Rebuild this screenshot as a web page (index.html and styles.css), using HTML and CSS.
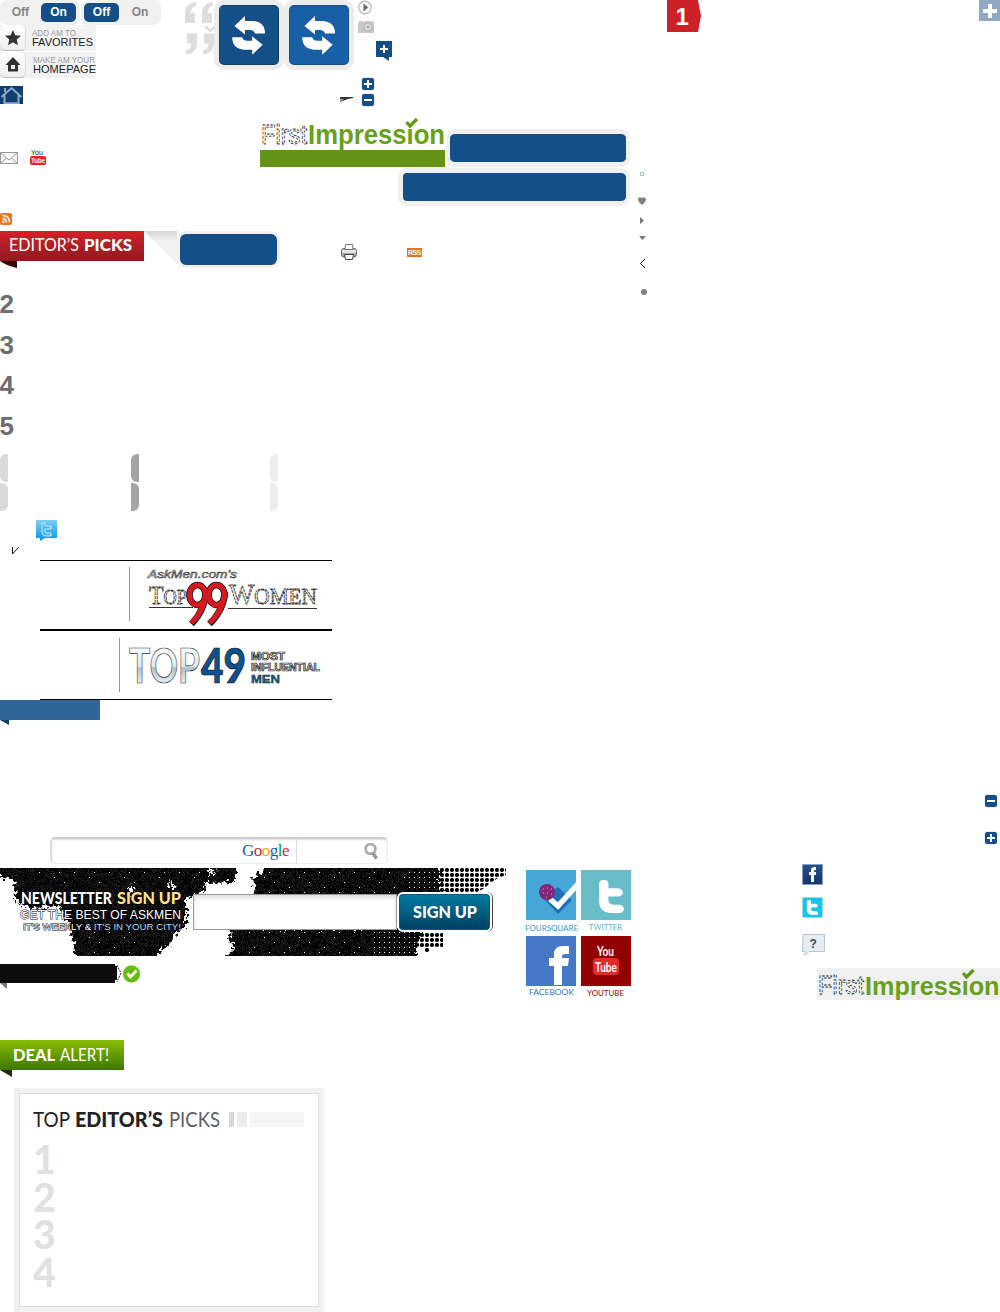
FILE: index.html
```html
<!DOCTYPE html>
<html lang="en">
<head>
<meta charset="utf-8">
<title>Sprites</title>
<link rel="stylesheet" href="styles.css">
</head>
<body>
<svg class="defs" width="0" height="0" aria-hidden="true">
  <defs>
    <symbol id="plus" viewBox="0 0 14 14"><rect width="14" height="14" rx="3" fill="#eee"/><rect x="1" y="1" width="12" height="12" rx="2" fill="#144f87"/><path d="M3 6h3V3h2v3h3v2H8v3H6V8H3z" fill="#fff"/></symbol>
    <symbol id="minus" viewBox="0 0 14 14"><rect width="14" height="14" rx="3" fill="#eee"/><rect x="1" y="1" width="12" height="12" rx="2" fill="#144f87"/><path d="M3 6h8v2H3z" fill="#fff"/></symbol>
    <symbol id="refresh" viewBox="0 0 34 42"><path id="arrow" d="M2.500 12 13 2v5h8q12 1 12 12.500H23Q22 16 18 16h-5v4.500z" fill="#fff"/><use href="#arrow" transform="rotate(180 16.600 21.400)"/></symbol>
    <symbol id="quote" viewBox="0 0 11 21"><path d="M11 0v4Q6 5 5.500 11H10v10H0V12Q0 1 11 0z" fill="#ddd"/></symbol>
    <symbol id="bird" viewBox="0 0 24 32"><path d="M4 0q4-1 5 3v5h10q4 1 4 4t-4 4H9v3q0 5 5 5h6q4 1 4 4t-4 4h-7Q0 32 0 20V4Q0 0 4 0z" fill="#fff"/></symbol>
    <linearGradient id="fade" x2="0" y2="1"><stop stop-color="#d5d5d5"/><stop offset=".3" stop-color="#eff0f0"/><stop offset="1" stop-color="#f1f2f2"/></linearGradient>
    <linearGradient id="silver" gradientUnits="userSpaceOnUse" x1="0" y1="19" x2="0" y2="53"><stop stop-color="#f6fafc"/><stop offset=".5" stop-color="#dde6ed"/><stop offset=".52" stop-color="#aebfcb"/><stop offset="1" stop-color="#eef3f6"/></linearGradient>
    <linearGradient id="sky" x2="0" y2="1"><stop stop-color="#7dcef0"/><stop offset="1" stop-color="#0798dc"/></linearGradient>
    <linearGradient id="navy" x2="0" y2="1"><stop stop-color="#27518d"/><stop offset="1" stop-color="#12356b"/></linearGradient>
    <pattern id="mesh" width="5" height="5" patternUnits="userSpaceOnUse"><rect width="5" height="5" fill="#050505"/><rect x="1" y="1" width="3" height="3" fill="#1b1b1b"/></pattern>
    <pattern id="dots" width="5" height="5" patternUnits="userSpaceOnUse"><circle cx="2" cy="2" r="2.100" fill="#000"/></pattern>
    <pattern id="holes" width="5" height="5" patternUnits="userSpaceOnUse"><rect x="4" y="4" width="1" height="1" fill="#fff"/></pattern>
    <pattern id="sparse" width="35" height="20" patternUnits="userSpaceOnUse"><path d="M4 4h1v1H4zM19 9h1v1h-1zM29 14h1v1h-1zM9 19h1v1H9zM24 4h1v1h-1z" fill="#fff"/></pattern>
    <filter id="ragged" filterUnits="userSpaceOnUse" x="-10" y="-10" width="530" height="110"><feTurbulence type="fractalNoise" baseFrequency=".3" numOctaves="2" seed="4"/><feDisplacementMap in="SourceGraphic" scale="13" xChannelSelector="R" yChannelSelector="G"/></filter>
  </defs>
</svg>

<main class="sheet">
  <div class="toggle toggle-on"><span>Off</span><b>On</b></div>
  <div class="toggle toggle-off"><b>Off</b><span>On</span></div>

  <div class="shortcuts">
    <div class="shortcut"><span class="key"><svg width="16" height="16" viewBox="0 0 16 16"><path d="m8 0 2.300 5.200 5.700.6-4.300 3.800 1.300 5.600L8 12.200l-5 3 1.300-5.600L0 5.800l5.700-.6z" fill="#333"/></svg></span>
      <svg width="70" height="26"><text x="6" y="11" font-size="9" fill="#999" textLength="44" lengthAdjust="spacingAndGlyphs">ADD AM TO</text><text x="6" y="21" font-size="11.500" fill="#222" textLength="61" lengthAdjust="spacingAndGlyphs">FAVORITES</text></svg></div>
    <div class="shortcut"><span class="key"><svg width="16" height="15" viewBox="0 0 16 15"><path d="m8 0 7.500 8H13v6.500H3V8H.5z" fill="#333"/><path d="M6 8h4v4H6z" fill="#eee"/></svg></span>
      <svg width="70" height="26"><text x="7" y="11" font-size="9" fill="#999" textLength="62" lengthAdjust="spacingAndGlyphs">MAKE AM YOUR</text><text x="7" y="21" font-size="11.500" fill="#222" textLength="63" lengthAdjust="spacingAndGlyphs">HOMEPAGE</text></svg></div>
  </div>

  <svg class="s home" width="23" height="18"><rect width="23" height="18" fill="#0e3f70"/><path d="M1.500 11 11.500 2l10 9M4.500 9v8.200h14V9M5 6V2" fill="none" stroke="#91a9c2" stroke-width="2"/></svg>

  <svg class="s quotes" width="32" height="56"><use href="#quote" x="0" y="1" width="11" height="21"/><use href="#quote" x="17" y="1" width="11" height="21"/><g transform="rotate(180 14 32)"><use href="#quote" x="-1" y="10" width="11" height="22"/><use href="#quote" x="16" y="10" width="11" height="22"/></g><path d="m20 25 5 5 5-5" fill="none" stroke="#ccc" stroke-width="1.500"/></svg>

  <div class="refreshers"><span class="refresh"><svg width="34" height="42"><use href="#refresh"/></svg></span><span class="refresh bright"><svg width="34" height="42"><use href="#refresh"/></svg></span></div>

  <svg class="s play" width="16" height="16"><circle cx="8" cy="7.500" r="6.300" fill="#f5f5f5" stroke="#bbb" stroke-width="1.200"/><path d="M6.500 3.500 11 7.500l-4.500 4z" fill="#666"/></svg>
  <svg class="s camera" width="16" height="14"><path d="M0 3h1V1h4v1h1l1-1h7l2 1v11H0z" fill="#c9c9c9"/><circle cx="10" cy="7" r="4" fill="#dedede" stroke="#b3b3b3"/><circle cx="10" cy="7" r="1.800" fill="#b5b5b5"/></svg>
  <svg class="s addtip" width="16" height="20"><path d="M0 0h16v16h-3v4l-6-4H0z" fill="#144f87"/><path d="M4 7h3V4h2v3h3v2H9v3H7V9H4z" fill="#fff"/></svg>
  <div class="steppers"><svg width="14" height="14"><use href="#plus"/></svg><svg width="14" height="14"><use href="#minus"/></svg></div>
  <svg class="s wedge" width="14" height="6"><path d="M0 0h13v1L8 2 0 5z" fill="#333"/><path d="M0 2h4L0 5z" fill="#aaa"/></svg>

  <svg class="s logo" width="190" height="50">
    <text x="1" y="26" font-size="27" fill="#fff" stroke="#111" stroke-width=".8" stroke-dasharray="3 1.500" textLength="46" lengthAdjust="spacingAndGlyphs">First</text>
    <text x="48" y="26" font-size="27" font-weight="bold" fill="#69a118" textLength="137" lengthAdjust="spacingAndGlyphs">Impression</text>
    <path d="M144 3h14v7.500h-14z" fill="#fff"/><path d="m146.500 4 3.500 4 7-7" fill="none" stroke="#5f9c14" stroke-width="3.400"/>
    <rect y="32" width="185" height="17" fill="#659315"/>
  </svg>

  <i class="pill pill-a"></i><i class="pill pill-b"></i><i class="pill pill-c"></i>

  <svg class="s mail" width="18" height="13"><path d="M.5.500h17v11H.5zL9 8l8.500-7.500M.5 11.500 6.500 6m11 5.500L11.500 6" fill="#f6f6f6" stroke="#999"/></svg>
  <svg class="s tube" width="17" height="18"><text x="1" y="7" font-size="8" fill="#222" textLength="12" lengthAdjust="spacingAndGlyphs">You</text><rect y="8" width="16" height="9" rx="2" fill="#f31f12"/><text x="1" y="15" font-size="8" font-weight="bold" fill="#fff" textLength="14" lengthAdjust="spacingAndGlyphs">Tube</text></svg>
  <svg class="s feed" width="12" height="12"><rect width="12" height="12" rx="2" fill="#e37725"/><path d="M2.500 5.500q4 0 4 4M2.500 2.500q7 0 7 7" fill="none" stroke="#fff" stroke-width="1.500"/><circle cx="3.500" cy="8.800" r="1.200" fill="#fff"/></svg>

  <svg class="s picks" width="178" height="38"><defs><linearGradient id="red" x2="0" y2="1"><stop stop-color="#d32128"/><stop offset="1" stop-color="#8d1b20"/></linearGradient></defs>
    <rect width="144" height="30" fill="url(#red)"/><path d="M0 30h17v7Q7 35 0 30z" fill="#3c070a"/><path d="M144 0h33v33z" fill="url(#fade)"/>
    <g class="geo" font-size="17" fill="#fff"><text x="9" y="20" textLength="70" lengthAdjust="spacingAndGlyphs">EDITOR’S</text><text x="84" y="20" font-weight="900" textLength="48" lengthAdjust="spacingAndGlyphs">PICKS</text></g></svg>

  <svg class="s printer" width="16" height="16"><rect x=".5" y="4.500" width="15" height="8.500" rx="2.500" fill="#aaa" stroke="#666"/><path d="M4.500.500h7l.5 5H4z" fill="#fff" stroke="#777"/><path d="M1 6h14v3H1z" fill="#e5e5e5"/><path d="M3.500 10.500h9l-1 5h-7z" fill="#fff" stroke="#444"/></svg>
  <span class="rss">RSS</span>

  <svg class="s glyphs" width="12" height="130"><path d="M2.500 2.500h3v3h-3z" fill="none" stroke="#a9bccc"/><path d="M0 29q1-3 4-1 3-2 4 1 0 3-4 6-4-3-4-6z" fill="#808080"/><path d="m2 47 4 3.500L2 54zM1 66h7l-3.500 4z" fill="#777"/><path d="m7 89-4.500 4.500L7 98" fill="none" stroke="#111"/><circle cx="6" cy="122" r="3" fill="#808080"/></svg>

  <svg class="s tag" width="34" height="32"><path d="M0 0h31l3 16-3 16H0z" fill="#ce2027"/><text x="8.500" y="25" font-size="24" font-weight="bold" fill="#fff">1</text></svg>
  <svg class="s expand" width="21" height="21"><rect width="21" height="21" fill="#91a8c1"/><path d="M4 9h5V4h4v5h5v4h-5v5H9v-5H4z" fill="#fff"/></svg>

  <div class="ranks"><span>2</span><span>3</span><span>4</span><span>5</span></div>

  <div class="caps cap-a"><i></i><i></i></div>
  <div class="caps cap-b"><i></i><i></i></div>
  <div class="caps cap-c"><i></i><i></i></div>

  <svg class="s tweet" width="21" height="22"><path d="M1 0h19q1 0 1 1v16q0 1-1 1H9l-5 3v-3H0V1q0-1 1-1z" fill="url(#sky)"/><path d="M6 3h3v3h6v3H9v2q0 2 2 2h4v3H10q-4 0-4-5z" fill="#4eb8e9" stroke="#c4ecfc"/></svg>
  <svg class="s tick" width="9" height="9"><path d="M.5 0v7l6-6.500" fill="none" stroke="#111"/></svg>

  <div class="banners">
    <svg width="292" height="69">
      <path d="M89.500 6v54" stroke="#999"/>
      <text x="108" y="17" font-size="10" font-style="italic" fill="#eee" stroke="#333" stroke-width=".5" textLength="89" lengthAdjust="spacingAndGlyphs">AskMen.com's</text>
      <g class="serif" fill="#eee" stroke="#333" stroke-width=".9" stroke-dasharray="3 .7"><text x="109" y="43" font-size="26" textLength="38" lengthAdjust="spacingAndGlyphs">T<tspan font-size="20">OP</tspan></text><text x="189" y="43" font-size="29" textLength="88" lengthAdjust="spacingAndGlyphs">W<tspan font-size="23">OMEN</tspan></text></g>
      <path d="M109 46.500h44m35 1h89" stroke="#333"/>
      <g fill="none" stroke="#111" stroke-width="6.500"><ellipse cx="157.500" cy="34" rx="8" ry="10"/><path d="M165.500 31q0 17-14 32"/><ellipse cx="176.500" cy="34" rx="8" ry="10"/><path d="M184.500 31q0 17-15 32"/></g>
      <g fill="none" stroke="#d71920" stroke-width="5"><ellipse cx="157.500" cy="34" rx="8" ry="10"/><path d="M165.500 31q0 17-14 31"/><ellipse cx="176.500" cy="34" rx="8" ry="10"/><path d="M184.500 31q0 17-15 31"/></g>
    </svg>
    <svg width="292" height="68">
      <path d="M79.500 7v54" stroke="#999"/>
      <g class="geo"><text x="89" y="52" font-size="47" fill="url(#silver)" stroke="#333" stroke-width=".7" font-weight="bold" textLength="71" lengthAdjust="spacingAndGlyphs">TOP</text>
      <text x="161" y="52" font-size="47" font-weight="900" fill="#0d5290" stroke="#111" stroke-width=".7" textLength="45" lengthAdjust="spacingAndGlyphs">49</text></g>
      <g font-size="10.500" font-weight="bold" fill="#ddd" stroke="#222" stroke-width=".7"><text x="211" y="29" textLength="34" lengthAdjust="spacingAndGlyphs">MOST</text><text x="211" y="39.500" textLength="69" lengthAdjust="spacingAndGlyphs">INFLUENTIAL</text><text x="211" y="52" fill="#1061ab" stroke-width=".4" textLength="29" lengthAdjust="spacingAndGlyphs">MEN</text></g>
    </svg>
  </div>
  <svg class="s strip" width="100" height="26"><path d="M0 0h100v20H0z" fill="#30659a"/><path d="M0 20h9v5z" fill="#173e68"/></svg>

  <div class="search"><span class="google"><b>G</b><b>o</b><b>o</b><b>g</b><b>l</b><b>e</b></span><span class="go"><svg width="15" height="18"><circle cx="6.500" cy="7" r="4.900" fill="none" stroke="#aaa" stroke-width="2.600"/><path d="m8.500 10.500 4 6" stroke="#999" stroke-width="3.500"/></svg></span></div>

  <section class="newsletter">
    <svg width="510" height="88">
      <g filter="url(#ragged)"><path d="M-9-9H236V14l-30 1-4 10-13 5h-3v28l-12 10-6 10-10 6v14H78L70 58 60 38 30 40 16 34 15 11-9 9z" fill="url(#mesh)"/><path d="M266-9H440v31l40 10H255l-2-24 10-3zM230 60H421v8l-4 8v20H220l14-15-5-10z" fill="url(#mesh)"/><path d="M128 26l3-10 4 10zM168 20l3-9 4 9zM208 2l2 5 6-4z" fill="#fff"/></g>
      <path d="M440 0h66v7l-8 3-8 5-5 5-10 5h-35zM413 62h30v18h-13v5h-5v-5h-12z" fill="url(#dots)"/>
      <path d="M30 0h190v15H30zM262 0h160v28H262zM240 62h120v24H240zM80 64h60v22H80z" fill="url(#sparse)"/>
      <path d="M405 0h46v30h-46zM370 62h48v25h-48z" fill="url(#holes)"/>
      <g class="outlined" fill="#fff"><g class="geo" font-size="16.500" font-weight="900"><text x="21" y="36" textLength="91" lengthAdjust="spacingAndGlyphs">NEWSLETTER</text><text x="117" y="36" fill="#ffe08a" textLength="64" lengthAdjust="spacingAndGlyphs">SIGN UP</text></g>
      <text x="20" y="51" font-size="13" textLength="161" lengthAdjust="spacingAndGlyphs">GET THE BEST OF ASKMEN</text>
      <text x="23" y="62" font-size="9.500" textLength="158" lengthAdjust="spacingAndGlyphs">IT'S WEEKLY &amp; <tspan fill="#b9dcfa">IT'S IN YOUR CITY!</tspan></text></g>
    </svg>
    <div class="signup"><span class="field"></span><span class="submit"><svg width="66" height="18"><text class="geo" x="1" y="15" font-size="17" font-weight="900" fill="#fff" textLength="64" lengthAdjust="spacingAndGlyphs">SIGN UP</text></svg></span></div>
  </section>

  <svg class="s badge" width="142" height="28"><path d="M0 2h115v2h2v14h-2v3H0z" fill="#0c0c0c"/><path d="m117 3 4 8-4 9" fill="none" stroke="#222" stroke-dasharray="2 1"/><path d="M0 21h7v6z" fill="#777"/><circle cx="131.500" cy="12" r="9.500" fill="#eee"/><circle cx="131.500" cy="12" r="8.500" fill="#66bd08"/><path d="m127.500 11.500 3 3.500 6-6.500" fill="none" stroke="#fff" stroke-width="2.700"/></svg>

  <div class="social">
    <figure class="c-four"><svg width="50" height="50"><rect width="50" height="50" fill="#45a7d8"/><path d="m17 28 15-11 14 13-14 14z" fill="#1d70b7"/><path d="m24 29 8 7L52 14" fill="none" stroke="#fff" stroke-width="5.500"/><circle cx="21" cy="22" r="8" fill="#86267b"/><path d="M17 19h1m3-1h1m3 1h1m-9 4h1m3 0h1m3 1h1m-6 3h1" stroke="#d29bc9"/></svg><figcaption><svg width="54" height="10"><text x="0" y="8.500" textLength="53" lengthAdjust="spacingAndGlyphs">FOURSQUARE</text></svg></figcaption></figure>
    <figure class="c-tw"><svg width="50" height="50"><rect width="50" height="50" fill="#67bdc8"/><use href="#bird" x="18" y="10" width="25" height="33"/></svg><figcaption><svg width="54" height="10"><text x="9" y="7.500" textLength="33" lengthAdjust="spacingAndGlyphs">TWITTER</text></svg></figcaption></figure>
    <figure class="c-fb"><svg width="50" height="50"><rect width="50" height="50" fill="#4678c8"/><path d="M28 49V30h-5v-8h5v-4q0-8 9-8h6v8h-4q-3 0-3 3v1h7l-1 8h-6v19z" fill="#fff"/></svg><figcaption><svg width="54" height="11"><text x="4" y="7" textLength="45" lengthAdjust="spacingAndGlyphs">FACEBOOK</text></svg></figcaption></figure>
    <figure class="c-yt"><svg width="50" height="50"><rect width="50" height="50" fill="#920000"/><rect x="12" y="22" width="26" height="17" rx="4" fill="#e32b2d"/><g font-size="14" font-weight="bold" fill="#fff"><text x="16" y="20" textLength="17" lengthAdjust="spacingAndGlyphs">You</text><text x="14" y="35.500" textLength="22" lengthAdjust="spacingAndGlyphs">Tube</text></g></svg><figcaption><svg width="54" height="11"><text x="7" y="8" textLength="37" lengthAdjust="spacingAndGlyphs">YOUTUBE</text></svg></figcaption></figure>
  </div>

  <div class="collapse"><svg width="14" height="14"><use href="#minus"/></svg><svg width="14" height="14"><use href="#plus"/></svg></div>

  <div class="contacts">
    <svg width="22" height="21"><rect x=".5" y=".5" width="20" height="20" fill="url(#navy)" stroke="#8ba0c0"/><path d="M9 18v-7H7V8h2V6q0-3 4-3h1v3h-1q-1 0-1 2h2v3h-2v7z" fill="#fff"/></svg>
    <svg width="22" height="22"><rect x=".5" y=".5" width="20" height="20" rx="1" fill="#13c5ef" stroke="#9adcec"/><use href="#bird" x="4" y="3" width="13" height="15"/></svg>
    <svg width="24" height="24"><path d="M1 .5h21.500v17H7l-4 4v-4H.5z" fill="#e5edf3" stroke="#b3c5d1"/><text x="7.500" y="13.500" font-size="12" font-weight="bold" fill="#445">?</text></svg>
  </div>

  <svg class="s logo-small" width="183" height="32"><rect width="183" height="32" fill="#f0f0f0"/>
    <text x="1" y="26" font-size="26" fill="#fff" stroke="#111" stroke-width=".8" stroke-dasharray="3 1.500" textLength="46" lengthAdjust="spacingAndGlyphs">First</text>
    <text x="48" y="27" font-size="26" font-weight="bold" fill="#69a118" textLength="134.500" lengthAdjust="spacingAndGlyphs">Impression</text>
    <path d="M143 3h14v8h-14z" fill="#f0f0f0"/><path d="m146 5 3.500 4 7-7" fill="none" stroke="#5f9c14" stroke-width="3.400"/></svg>

  <svg class="s deal" width="124" height="38"><defs><linearGradient id="green" x2="0" y2="1"><stop stop-color="#8abf00"/><stop offset="1" stop-color="#3f7600"/></linearGradient></defs><rect width="124" height="30" fill="url(#green)"/><path d="M0 30h12v7z" fill="#1d2a10"/><g class="geo" font-size="17" fill="#fff"><text x="13" y="21" font-weight="900" textLength="42" lengthAdjust="spacingAndGlyphs">DEAL</text><text x="60" y="21" textLength="49" lengthAdjust="spacingAndGlyphs">ALERT!</text></g></svg>

  <section class="card">
    <header><svg width="188" height="22"><g class="geo" font-size="20.500"><text x="0" y="18" fill="#222" textLength="37" lengthAdjust="spacingAndGlyphs">TOP</text><text x="42" y="18" font-weight="900" fill="#222" textLength="88" lengthAdjust="spacingAndGlyphs">EDITOR’S</text><text x="136" y="18" fill="#606060" textLength="51" lengthAdjust="spacingAndGlyphs">PICKS</text></g></svg><span class="bars"><i></i><i></i><i></i></span></header>
    <ol><li>1</li><li>2</li><li>3</li><li>4</li></ol>
  </section>
</main>
</body>
</html>
```
FILE: styles.css
```css
* { box-sizing: border-box; }
body { margin: 0; background: #fff; font-family: "Liberation Sans", Arial, sans-serif; }
svg { display: block; flex: none; }
.defs { position: absolute; }
.geo { font-family: Lato, sans-serif; }
.serif { font-family: "Liberation Serif", serif; }
.outlined { paint-order: stroke; stroke: #000; stroke-width: 1px; }

/* free canvas of independent sprites */
.sheet { position: relative; width: 1000px; height: 1312px; overflow: hidden; }
.s, .toggle, .shortcuts, .refreshers, .steppers, .pill, .rss, .ranks, .caps,
.banners, .search, .newsletter, .social, .collapse, .contacts, .card { position: absolute; }

.toggle { top: 0; width: 80px; height: 25px; padding: 3px 4px 3px 3px; display: flex; align-items: center; background: #f0f0f0; border-radius: 7px; font: bold 12px/19px "Liberation Sans", sans-serif; color: #858585; text-align: center; }
.toggle span { flex: 1; }
.toggle b { width: 35px; background: #144f87; color: #fff; border-radius: 5px; }
.toggle-on { left: 0; }
.toggle-on span { padding-right: 12px; text-align: right; }
.toggle-off { left: 81px; }
.toggle-off span { padding-left: 4px; }

.shortcuts { left: 0; top: 25px; display: grid; gap: 1px; }
.shortcut { width: 96px; height: 26px; display: flex; background: #f2f2f2; }
.key { width: 26px; display: grid; place-items: center; border-radius: 5px; background: linear-gradient(#fff, #eee); border-bottom: 1px solid #bbb; border-right: 1px solid #ddd; }

.home { left: 0; top: 86px; }
.quotes { left: 185px; top: 1px; }
.refreshers { left: 214px; top: 0; display: flex; }
.refresh { width: 70px; height: 70px; border: 5px solid #ececec; border-radius: 10px; background: #144f87; display: grid; place-items: center; box-shadow: inset 0 0 0 1px #123f70; }
.bright { background: #1860a6; box-shadow: inset 0 0 0 1px #144f87; }
.play { left: 357px; top: 0; }
.camera { left: 358px; top: 20px; }
.addtip { left: 376px; top: 41px; }
.steppers { left: 361px; top: 77px; display: grid; gap: 2px; }
.wedge { left: 340px; top: 97px; }
.logo { left: 260px; top: 118px; }

.pill { background: #144f87; border: 4px solid #f0f0f0; border-radius: 9px; }
.pill-a { left: 446px; top: 129px; width: 184px; height: 38px; border-width: 5px 4px; }
.pill-b { left: 398px; top: 168px; width: 232px; height: 38px; border-width: 5px 4px 5px 5px; }
.pill-c { left: 177px; top: 231px; width: 103px; height: 37px; border-width: 3px; }

.mail { left: 0; top: 152px; }
.tube { left: 30px; top: 148px; }
.feed { left: 0; top: 213px; }
.picks { left: 0; top: 231px; }
.printer { left: 341px; top: 244px; }
.rss { left: 407px; top: 248px; width: 15px; height: 9px; background: #ec711a; color: #fff; font: bold 7px/9px "Liberation Sans", sans-serif; letter-spacing: -.5px; text-align: center; }
.glyphs { left: 638px; top: 170px; }
.tag { left: 667px; top: 0; }
.expand { left: 979px; top: 0; }

.ranks { left: -.5px; top: 285px; display: grid; grid-auto-rows: 40.5px; font: bold 26px/39px "Liberation Sans", sans-serif; color: #6d6e71; }

.caps { top: 454px; display: grid; gap: 1px; }
.caps i { width: 8px; height: 28px; border-radius: 6px 0 0 6px; background: currentColor; }
.caps i + i { border-radius: 0 6px 6px 0; }
.cap-a { left: 0; color: #dadada; }
.cap-b { left: 131px; color: #a5a5a5; }
.cap-c { left: 270px; color: #ededed; }

.tweet { left: 36px; top: 520px; }
.tick { left: 12px; top: 547px; }

.banners { left: 40px; top: 560px; width: 292px; border-top: 1px solid #000; }
.banners svg { height: 68px; }
.banners svg + svg { height: 71px; border-top: 2px solid #000; border-bottom: 1px solid #000; }
.strip { left: 0; top: 700px; }

.search { left: 50px; top: 837px; width: 338px; height: 27px; display: flex; border: 1px solid #eee; border-top: 2px solid #ccc; border-left: 2px solid #ddd; border-radius: 5px; box-shadow: inset 0 1px 2px #ddd; }
.google { width: 245px; padding-right: 7px; border-right: 1px solid #ddd; text-align: right; font: 17px/24px "Liberation Serif", serif; letter-spacing: -.5px; }
.google b { font-weight: 400; color: #2857b8; }
.google b:nth-child(2), .google b:nth-child(6) { color: #d3262d; }
.google b:nth-child(3) { color: #e9a51c; }
.google b:nth-child(5) { color: #16943a; }
.go { flex: 1; display: flex; justify-content: flex-end; padding: 3px 8px 0 0; }

.newsletter { left: 0; top: 868px; width: 510px; height: 90px; }
.signup { position: absolute; left: 193px; top: 24px; display: flex; align-items: center; }
.field { width: 204px; height: 36px; background: #fff; border: 1px solid #999; box-shadow: inset 0 3px 4px #ddd; }
.submit { width: 95px; height: 40px; display: grid; place-items: center; border: 2px solid #fff; border-radius: 6px; background: linear-gradient(#007ea2, #003e60); box-shadow: inset 0 0 0 1px #075b7b, 1px 0 0 #444; }

.badge { left: 0; top: 962px; }

.social { left: 525px; top: 870px; display: grid; grid-template-columns: 55px 55px; grid-auto-rows: 66px; font: 8px Lato, sans-serif; }
.social figure { margin: 0; padding-left: 1px; }
.social figcaption { margin: 2px 0 0 -1px; }
.social figcaption text { fill: currentColor; }
.social .c-four { color: #349cce; }
.social .c-tw { color: #5db8c4; }
.social .c-fb { color: #3973c4; }
.social .c-yt { color: #920000; }

.collapse { left: 984px; top: 794px; display: grid; gap: 23px; }
.contacts { left: 802px; top: 864px; display: grid; grid-template-rows: 33px 37px 24px; }
.logo-small { left: 817px; top: 968px; }
.deal { left: 0; top: 1040px; }

.card { left: 14px; top: 1088px; width: 310px; height: 224px; border: 5px solid #f1f1f1; padding: 16px 14px; box-shadow: inset 0 0 0 1px #dcdcdc; }
.card header { display: flex; gap: 8px; }
.bars { display: flex; gap: 3px; padding-top: 3px; }
.bars i { height: 15px; width: 5px; background: #d5d8d8; }
.bars i:nth-child(2) { width: 10px; background: #ececec; }
.bars i:nth-child(3) { width: 54px; background: #f5f5f5; }
.card ol { margin: 10px 0 0; padding: 0; list-style: none; font: 900 39px/37.6px Lato, sans-serif; color: #e1e1e1; }
```
